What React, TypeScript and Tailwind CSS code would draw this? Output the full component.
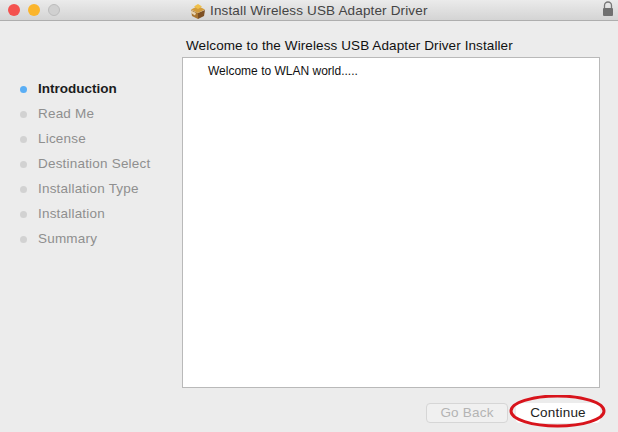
import React from "react";

const steps = ["Read Me", "License", "Destination Select", "Installation Type", "Installation", "Summary"];

function PackageIcon() {
  return (
    <svg width="16" height="15" viewBox="0 0 16 15" className="shrink-0">
      <path d="M1 6 L8 9 L8 15 L2 12 Z" fill="#a8742f" />
      <path d="M15 6 L8 9 L8 15 L14 12 Z" fill="#7d5024" />
      <path d="M1 5.5 L8 2 L15 5.5 L8 9 Z" fill="#d39c3c" />
      <path d="M4 2.5 L8 0 L12 2.5 L8 5 Z" fill="#f0c04a" />
      <path d="M1 6.5 L6 9 L5 11.5 L1 9 Z" fill="#e6d2b0" />
    </svg>
  );
}

function Lock() {
  return (
    <svg width="12" height="16" viewBox="0 0 12 16">
      <path d="M2.5 8 V4.5 a3.5 3.5 0 0 1 7 0 V8" fill="none" stroke="#777777" strokeWidth="1.3" />
      <rect x="1" y="7" width="10" height="8" rx="1" fill="#707070" />
    </svg>
  );
}

export default function App() {
  return (
    <div className="relative w-[618px] h-[432px] overflow-hidden flex flex-col bg-[#ececec] font-['Liberation_Sans',Arial,sans-serif]">
      <div className="h-[21px] shrink-0 flex items-center bg-gradient-to-b from-[#ebebeb] to-[#d4d4d4] border-b border-[#aeaeae] relative">
        <div className="flex items-center gap-2 pl-2">
          <span className="w-3 h-3 rounded-full bg-[#f4524f]" />
          <span className="w-3 h-3 rounded-full bg-[#fbb52c]" />
          <span className="w-3 h-3 rounded-full bg-[#d0d0d0] border border-[#bcbcbc]" />
        </div>
        <div className="absolute left-[190px] top-[3px] flex items-center gap-[4px]">
          <PackageIcon />
          <span className="text-[13.5px] tracking-[0.15px] leading-4 text-[#444444]">Install Wireless USB Adapter Driver</span>
        </div>
        <div className="absolute right-[4px] top-[1px]"><Lock /></div>
      </div>
      <div className="flex flex-1 min-h-0 pr-[18px]">
        <div className="w-[182px] shrink-0 pl-5 pt-[56px] flex flex-col">
          <div className="h-[25px] flex items-center gap-[11px] text-[13.5px] font-bold text-[#1c1c1c]">
            <span className="w-[7px] h-[7px] rounded-full bg-[#5aaef5]" />
            Introduction
          </div>
          {steps.map((s) => (
            <div key={s} className="h-[25px] flex items-center gap-[11px] text-[13.5px] tracking-[0.2px] text-[#8f8f8f]">
              <span className="w-[7px] h-[7px] rounded-full bg-[#d2d2d2]" />
              {s}
            </div>
          ))}
        </div>
        <div className="flex-1 flex flex-col pt-[17px] min-w-0">
          <div className="h-[19px] pl-1 text-[13.5px] tracking-[0.1px] leading-[16px] whitespace-nowrap text-[#111111]">Welcome to the Wireless USB Adapter Driver Installer</div>
          <div className="h-[331px] bg-white border border-[#b9b9b9] pl-[25px] pt-[6px] text-[12px] leading-[14px] text-[#111111]">
            Welcome to WLAN world.....
          </div>
          <div className="flex justify-end items-start gap-2 pt-[15px]">
            <div className="w-[82px] h-[20px] rounded-[4px] border border-[#d6d6d6] bg-[#f0f0f0] flex items-center justify-center text-[13.5px] tracking-[0.2px] text-[#b4b4b4]">Go Back</div>
            <div className="relative w-[84px] h-[20px] rounded-[4px] bg-white flex items-center justify-center text-[13.5px] tracking-[0.2px] text-[#222222]">
              Continue
              <svg className="absolute left-[-7px] top-[-8px] max-w-none" width="97" height="33" viewBox="0 0 97 33">
                <ellipse cx="48.5" cy="16" rx="46.5" ry="15" fill="none" stroke="#d8141c" strokeWidth="3" />
              </svg>
            </div>
          </div>
        </div>
      </div>
    </div>
  );
}
